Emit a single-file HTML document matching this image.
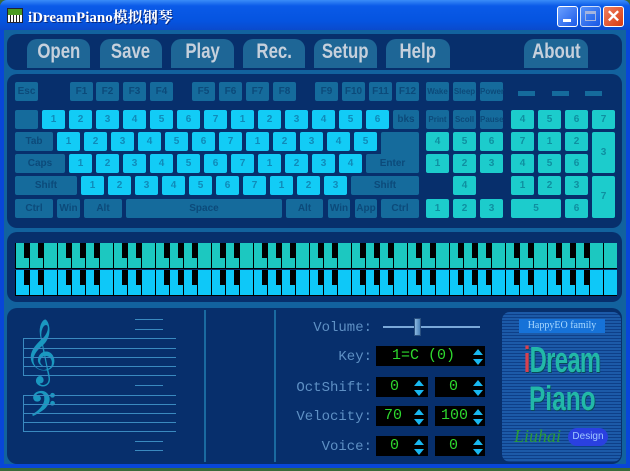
<!DOCTYPE html><html><head><meta charset="utf-8"><style>
*{margin:0;padding:0;box-sizing:border-box}
body{width:630px;height:471px;overflow:hidden;background:#3a6a3a;position:relative;font-family:"Liberation Sans",sans-serif}
.a{position:absolute}
#win{left:0;top:0;width:630px;height:468px;background:#0846d8;border-radius:7px 7px 0 0}
#title{left:0;top:0;width:630px;height:30px;border-radius:7px 7px 0 0;background:linear-gradient(#3a8cf8,#0a5ae8 20%,#0554e0 70%,#0a4acc)}
#ttext{left:28px;top:6px;color:#fff;font:bold 15px "Liberation Serif","Noto Serif CJK SC",serif;text-shadow:1px 1px 0 #0a2a80}
.wb{top:6px;width:21px;height:21px;border:1px solid #fff;border-radius:3px;background:linear-gradient(135deg,#6aa0ff,#1c5ae8)}
#client{left:4px;top:30px;width:622px;height:434px;background:#12629e}
.panel{background:#072f6c;border-radius:10px}
.tab{top:39px;height:29px;background:#1e6696;border-radius:10px 10px 0 0;color:#c6d0dc;text-align:center;line-height:29px}
.tab span{display:inline-block;font:bold 21px "Liberation Sans",sans-serif;transform:scaleX(.8)}
.k{height:19px;border-radius:2px;font:bold 10px "Liberation Sans",sans-serif;text-align:center;line-height:19px}
.i{background:#156b9c;color:#0c4a7a}
.c{background:#12ccf6;color:#108ab8}
.t{background:#1ccccc;color:#0f8fa0}
.lab{color:#5e90c4;font:14px "Liberation Mono",monospace;text-align:right;width:100px}
.box{background:#000;color:#2ed82e;font:15px "Liberation Mono",monospace;height:20px;line-height:20px}
</style></head><body>
<div id="win" class="a"></div>
<div id="title" class="a"></div>
<div class="a" style="left:7px;top:8px;width:16px;height:15px;background:#4a9a20;border:1px solid #223"><div style="margin-top:6px;height:7px;background:repeating-linear-gradient(90deg,#fff 0 2px,#222 2px 3px)"></div></div>
<div id="ttext" class="a">iDreamPiano模拟钢琴</div>
<div class="a wb" style="left:557px"><div class="a" style="left:5px;top:12px;width:8px;height:3px;background:#fff"></div></div>
<div class="a wb" style="left:580px;opacity:.8"><div class="a" style="left:4px;top:4px;width:11px;height:10px;border:1px solid #ccd;border-top-width:3px"></div></div>
<div class="a wb" style="left:603px;background:linear-gradient(135deg,#f08060,#d83a10);color:#fff;font:bold 17px 'Liberation Sans';text-align:center;line-height:19px">✕</div>
<div id="client" class="a"></div>
<div class="a panel" style="left:7px;top:34px;width:615px;height:36px"></div>
<div class="a tab" style="left:27px;width:63px"><span>Open</span></div>
<div class="a tab" style="left:100px;width:62px"><span>Save</span></div>
<div class="a tab" style="left:171px;width:63px"><span>Play</span></div>
<div class="a tab" style="left:243px;width:62px"><span>Rec.</span></div>
<div class="a tab" style="left:314px;width:63px"><span>Setup</span></div>
<div class="a tab" style="left:386px;width:64px"><span>Help</span></div>
<div class="a tab" style="left:524px;width:64px"><span>About</span></div>
<div class="a panel" style="left:7px;top:74px;width:615px;height:154px"></div>
<div class="a panel" style="left:7px;top:232px;width:615px;height:70px"></div>
<div class="a panel" style="left:7px;top:308px;width:615px;height:156px"></div>
<div class="a" style="left:204px;top:310px;width:2px;height:152px;background:#1a6aa0"></div>
<div class="a" style="left:274px;top:310px;width:2px;height:152px;background:#1a6aa0"></div>
<div class="a" style="left:24px;top:324px;font:56px 'DejaVu Sans',serif;color:#1a98c0;line-height:56px">𝄞</div>
<div class="a" style="left:30px;top:389px;font:bold 40px 'DejaVu Serif',serif;color:#1a98c0;line-height:40px">𝄢</div>
<div class="a lab" style="left:272px;top:320px">Volume:</div>
<div class="a" style="left:383px;top:326px;width:97px;height:2px;background:#7aa8d8"></div>
<div class="a" style="left:414px;top:318px;width:7px;height:18px;background:linear-gradient(90deg,#8ab8e0,#4a80b8);border:1px solid #2a5080"></div>
<div class="a lab" style="left:272px;top:349px">Key:</div>
<div class="a box" style="left:376px;top:346px;width:109px;padding-left:16px">1=C (0)</div>
<div class="a lab" style="left:272px;top:380px">OctShift:</div>
<div class="a box" style="left:376px;top:377px;width:52px;padding-left:14px">0</div>
<div class="a box" style="left:435px;top:377px;width:50px;padding-left:14px">0</div>
<div class="a lab" style="left:272px;top:409px">Velocity:</div>
<div class="a box" style="left:376px;top:406px;width:52px;padding-left:8px">70</div>
<div class="a box" style="left:435px;top:406px;width:50px;padding-left:6px">100</div>
<div class="a lab" style="left:272px;top:439px">Voice:</div>
<div class="a box" style="left:376px;top:436px;width:52px;padding-left:14px">0</div>
<div class="a box" style="left:435px;top:436px;width:50px;padding-left:14px">0</div>
<div class="a" style="left:502px;top:312px;width:119px;height:150px;border-radius:8px;background:repeating-linear-gradient(#1c5aa8 0 2px,#0e3f88 2px 3px)"></div>
<div class="a" style="left:519px;top:319px;width:86px;height:14px;background:#1672d8;color:#a8d8ff;font:10px 'Liberation Serif',serif;text-align:center;line-height:14px">HappyEO family</div>
<div class="a" style="left:500px;top:339px;width:124px;text-align:center;line-height:40px"><span style="display:inline-block;font:bold 36px 'Liberation Sans',sans-serif;color:#22b8a8;transform:scaleX(.66);text-shadow:1px 1px 0 #0a4a5a;letter-spacing:-1px"><span style="color:#d84050">i</span>Dream</span></div>
<div class="a" style="left:500px;top:380px;width:124px;text-align:center;line-height:36px"><span style="display:inline-block;font:bold 34px 'Liberation Sans',sans-serif;color:#22b8a8;transform:scaleX(.72);text-shadow:1px 1px 0 #0a4a5a">Piano</span></div>
<div class="a" style="left:514px;top:426px;color:#2a9a3a;font:italic 18px 'Liberation Serif',serif">Liuhai</div>
<div class="a" style="left:568px;top:428px;width:40px;height:18px;border-radius:9px;background:#2a40e0;color:#a0c8ff;font:10px 'Liberation Sans';text-align:center;line-height:18px">Design</div>
<script>
function d(h){document.body.insertAdjacentHTML('beforeend',h)}
function K(x,y,w,t,c,h){d('<div class="a k '+c+'" style="left:'+x+'px;top:'+y+'px;width:'+w+'px;height:'+(h||19)+'px;line-height:'+(h||19)+'px">'+t+'</div>')}
K(15,82,23,'Esc','i');
[70,96,123,150].forEach((x,i)=>K(x,82,23,'F'+(i+1),'i'));
[192,219,246,273].forEach((x,i)=>K(x,82,23,'F'+(i+5),'i'));
[315,342,369,396].forEach((x,i)=>K(x,82,23,'F'+(i+9),'i'));
['Wake','Sleep','Power'].forEach((t,i)=>K(426+27*i,82,23,'<span style="font-size:8px">'+t+'</span>','i'));
[518,552,585].forEach(x=>d('<div class="a" style="left:'+x+'px;top:91px;width:17px;height:5px;background:#156b9c"></div>'));
K(15,110,23,'','i');var r1='1234567123456';for(var j=0;j<13;j++)K(42+27*j,110,23,r1[j],'c');K(393,110,26,'bks','i');
K(15,132,38,'Tab','i');var r2='123456712345';for(j=0;j<12;j++)K(57+27*j,132,23,r2[j],'c');
K(381,132,38,'','i',41);
K(15,154,50,'Caps','i');var r3='12345671234';for(j=0;j<11;j++)K(69+27*j,154,23,r3[j],'c');K(366,154,53,'Enter','i');
K(15,176,62,'Shift','i');var r4='1234567123';for(j=0;j<10;j++)K(81+27*j,176,23,r4[j],'c');K(351,176,68,'Shift','i');
K(15,199,38,'Ctrl','i');K(57,199,23,'Win','i');K(84,199,38,'Alt','i');K(126,199,156,'Space','i');K(286,199,37,'Alt','i');K(328,199,22,'Win','i');K(355,199,22,'App','i');K(381,199,38,'Ctrl','i');
['Print','Scoll','Pause'].forEach((t,i)=>K(426+27*i,110,23,'<span style="font-size:8px">'+t+'</span>','i'));
'456'.split('').forEach((t,i)=>K(426+27*i,132,23,t,'t'));
'123'.split('').forEach((t,i)=>K(426+27*i,154,23,t,'t'));
K(453,176,23,'4','t');
'123'.split('').forEach((t,i)=>K(426+27*i,199,23,t,'t'));
'4567'.split('').forEach((t,i)=>K(511+27*i,110,23,t,'t'));
'712'.split('').forEach((t,i)=>K(511+27*i,132,23,t,'t'));K(592,132,23,'3','t',41);
'456'.split('').forEach((t,i)=>K(511+27*i,154,23,t,'t'));
'123'.split('').forEach((t,i)=>K(511+27*i,176,23,t,'t'));K(592,176,23,'7','t',42);
K(511,199,50,'5','t');K(565,199,23,'6','t');
[[243,'#1cc8c0'],[270,'#0ec8f8']].forEach(function(r){
 var y=r[0],h=''; h+='<div class="a" style="left:15px;top:'+y+'px;width:602px;height:26px;background:#000"></div>';
 for(var w=0;w<43;w++){var x=15+w*14;h+='<div class="a" style="left:'+(x+1)+'px;top:'+y+'px;width:13px;height:25px;background:'+r[1]+'"></div>';
  var n=w%7; if(n!=2&&n!=6&&w<42) h+='<div class="a" style="left:'+(x+9)+'px;top:'+y+'px;width:10px;height:15px;background:#000"></div>';}
 d(h);});
var s='';[338,348,357,366,375,395,404,413,422,431].forEach(y=>s+='<div class="a" style="left:23px;top:'+y+'px;width:153px;height:1px;background:#3a8ac0"></div>');
s+='<div class="a" style="left:23px;top:338px;width:1px;height:38px;background:#3a8ac0"></div><div class="a" style="left:23px;top:395px;width:1px;height:37px;background:#3a8ac0"></div>';
[319,329,385,441,450].forEach(y=>s+='<div class="a" style="left:135px;top:'+y+'px;width:28px;height:1px;background:#3a8ac0"></div>');d(s);
[[474,347],[415,378],[474,378],[415,407],[474,407],[415,437],[474,437]].forEach(p=>{
d('<svg class="a" style="left:'+(p[0]-2)+'px;top:'+(p[1]+1)+'px" width="12" height="18"><path d="M1 7 L6 1 L11 7Z M1 11 L6 17 L11 11Z" fill="#18b8f0"/></svg>')});
</script>
</body></html>
